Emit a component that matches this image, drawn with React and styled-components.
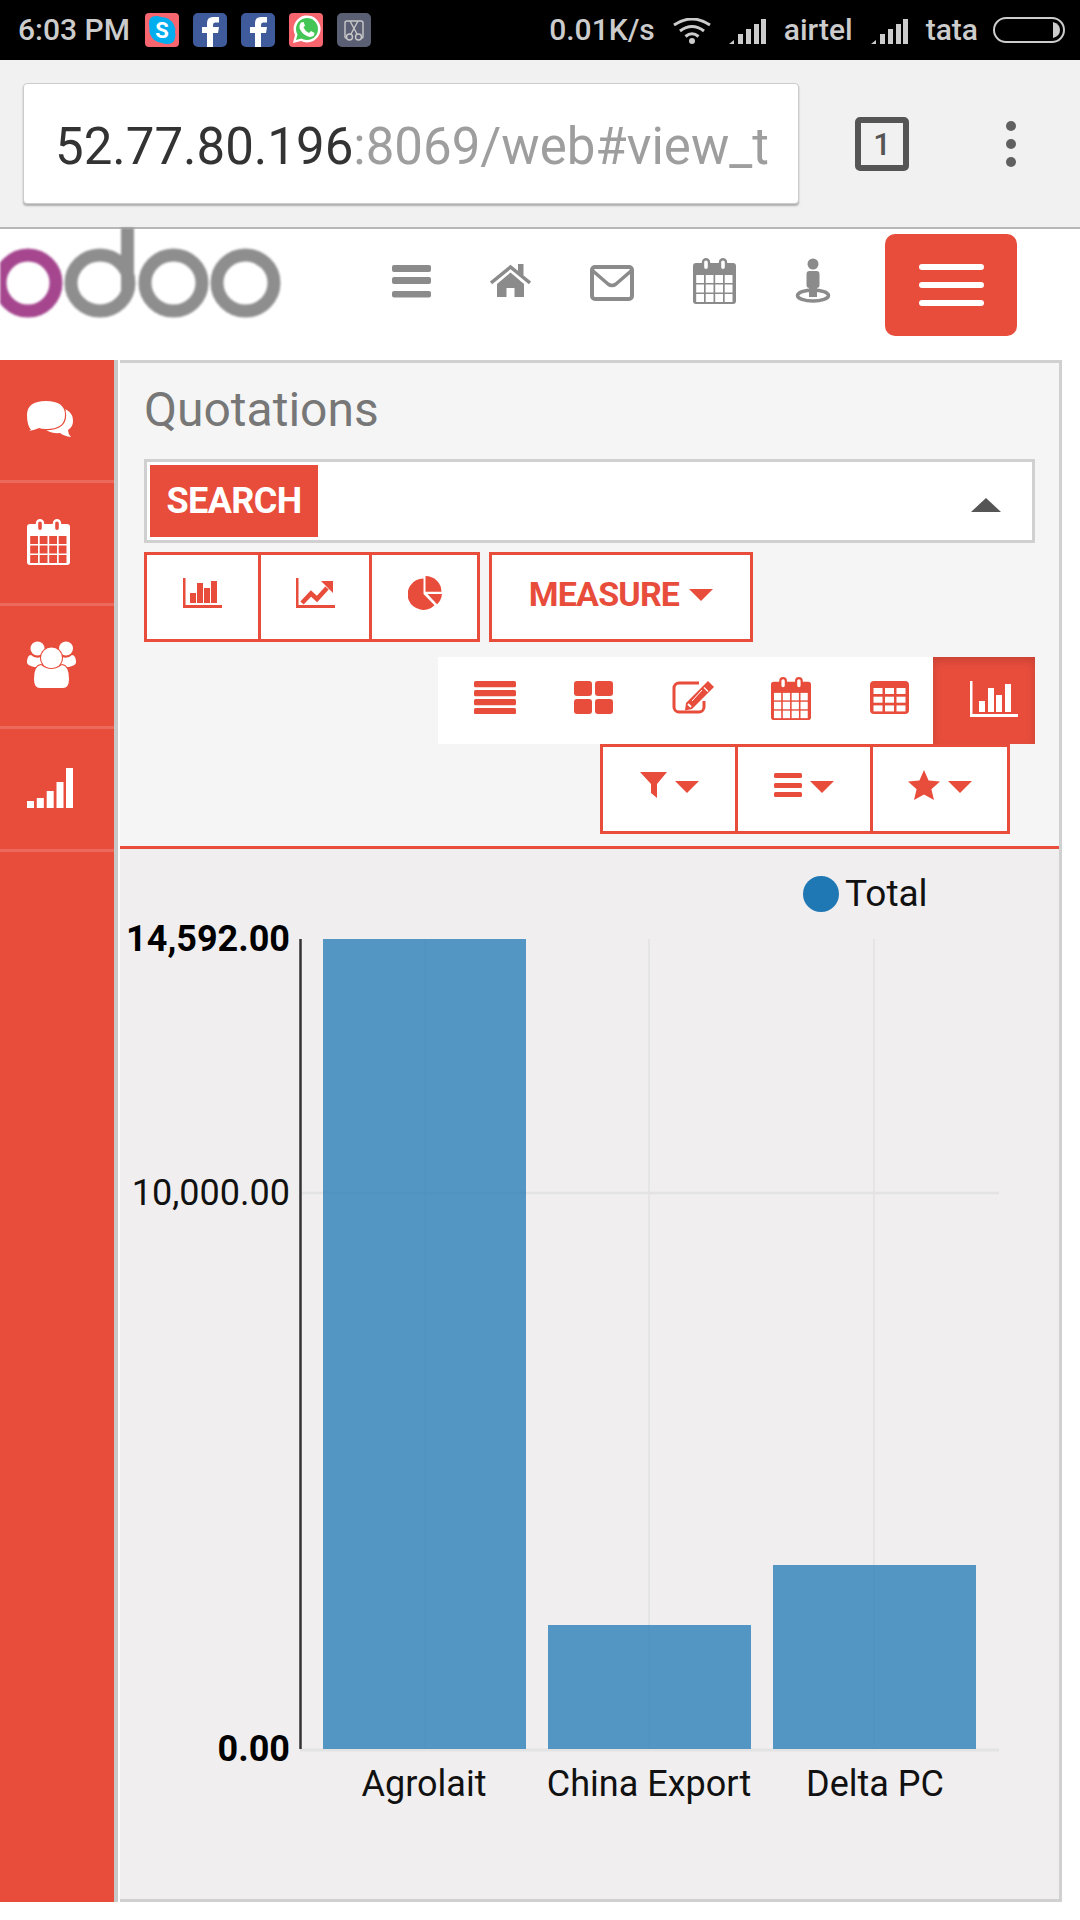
import React from 'react';
import styled, { createGlobalStyle } from 'styled-components';

const RED = '#e84d3c';
const Global = createGlobalStyle`
  html, body { margin: 0; padding: 0; background: #fff; }
  * { box-sizing: border-box; }
  body { font-family: Roboto, "Liberation Sans", sans-serif; }
`;
const Page = styled.div`width:1080px;height:1920px;overflow:hidden;display:flex;flex-direction:column;background:#fff;`;
const StatusBar = styled.div`height:60px;background:#000;color:#ccc;display:flex;align-items:center;padding:0 15px 0 18px;font-size:30px;font-weight:500;flex:none;`;
const StatusText = styled.span`line-height:60px;margin-top:-1px;`;
const StatusIcons = styled.div`display:flex;gap:14px;margin-left:15px;`;
const StatusRight = styled.div`display:flex;align-items:center;gap:18px;margin-left:auto;`;
const Chrome = styled.div`height:169px;flex:none;background:#f1f1f1;border-bottom:2px solid #b8b8b8;display:flex;align-items:flex-start;padding:23px 0 0 23px;`;
const Address = styled.div`width:776px;height:121px;background:#fff;border:1px solid #ccc;border-radius:4px;box-shadow:0 2px 2px rgba(0,0,0,.28);padding:5px 30px 0 31px;display:flex;align-items:center;font-size:51px;`;
const AddressClip = styled.div`overflow:hidden;white-space:nowrap;width:100%;color:#9e9e9e;`;
const Host = styled.span`color:#333;`;
const TabCount = styled.div`width:54px;height:54px;margin:34px 0 0 56px;border:6px solid #555;border-radius:5px;color:#555;font-size:31px;font-weight:500;display:flex;align-items:center;justify-content:center;`;
const Dots = styled.div`display:flex;flex-direction:column;gap:8px;margin:38px 0 0 97px;`;
const Dot = styled.span`width:10px;height:10px;border-radius:50%;background:#606060;`;
const Header = styled.div`height:131px;flex:none;display:flex;align-items:flex-start;color:#8b8b8b;`;
const Logo = styled.svg`width:285px;height:90px;flex:none;margin:-1px 107px 0 0;filter:blur(1px);`;
const NavIcon = styled.svg`flex:none;height:46px;margin:29px 59px 0 0;color:#8b8b8b;`;
const MenuBtn = styled.div`width:132px;height:102px;margin:5px 0 0 -5px;background:${RED};border-radius:10px;display:flex;flex-direction:column;align-items:center;justify-content:center;gap:12px;`;
const MenuLine = styled.span`width:65px;height:6px;background:#fff;border-radius:3px;`;
const Body = styled.div`height:1542px;flex:none;display:flex;`;
const Sidebar = styled.div`width:118px;flex:none;background:${RED};border-right:4px solid #c8c8c8;display:flex;flex-direction:column;`;
const SideRow = styled.div`height:123px;flex:none;border-bottom:3px solid #ec6a5b;display:flex;align-items:center;padding:0 0 2px 27px;color:#fff;`;
const Panel = styled.div`width:942px;margin-left:2px;flex:none;border:3px solid #d0d0d0;border-left:none;display:flex;flex-direction:column;`;
const Top = styled.div`height:486px;flex:none;background:#f5f5f5;border-bottom:3px solid ${RED};padding:0 24px;display:flex;flex-direction:column;`;
const Title = styled.h1`margin:0;height:96px;flex:none;font-size:48px;font-weight:400;color:#777;line-height:93px;`;
const SearchBox = styled.div`height:84px;flex:none;background:#fff;border:3px solid #d0d0d0;padding:3px;display:flex;align-items:center;justify-content:space-between;`;
const SearchLabel = styled.div`width:168px;height:72px;background:${RED};color:#fff;font-size:36px;font-weight:700;letter-spacing:-.6px;display:flex;align-items:center;justify-content:center;`;
const SearchCaret = styled.svg`width:30px;height:14px;margin:8px 28px 0 0;`;
const BtnRow = styled.div`display:flex;margin-top:9px;height:90px;flex:none;`;
const GroupBtn = styled.div`height:90px;flex:none;background:#fff;border:3px solid ${RED};color:${RED};display:flex;align-items:center;justify-content:center;gap:8px;padding-bottom:8px;margin-left:${p => p.$first ? 0 : -3}px;width:${p => p.$w}px;`;
const MeasureBtn = styled(GroupBtn)`margin-left:9px;font-size:34px;font-weight:700;letter-spacing:-.8px;gap:10px;padding-bottom:6px;`;
const Switcher = styled.div`display:grid;grid-template-columns:98px 98px 102px 94px 95px 102px;align-self:flex-end;margin-top:15px;height:87px;flex:none;background:#fff;padding-left:8px;color:${RED};`;
const SwitchItem = styled.div`display:flex;align-items:center;justify-content:center;padding-left:${p => p.$pl || 0}px;padding-bottom:${p => p.$pb ?? 6}px;`;
const ActiveItem = styled(SwitchItem)`background:${RED};color:#fff;box-shadow:inset 0 4px 8px rgba(0,0,0,.14);`;
const FilterRow = styled.div`display:flex;align-self:flex-end;margin-right:25px;height:90px;flex:none;`;
const ChartArea = styled.div`flex:1;background:#f0eeef;`;
const ChartSvg = styled.svg`display:block;width:939px;height:1050px;font-family:Roboto,sans-serif;`;
const ShiftUp = styled.div`margin-top:-2px;`;
const BatteryWrap = styled.div`margin-left:-3px;display:flex;`;

const Caret = ({ w = 24, h = 12, mt = 4 }) => (
  <svg width={w} height={h} viewBox="0 0 24 12" style={{ marginTop: mt }}><path d="M0 0H24L12 12Z" fill="currentColor" /></svg>
);
const Calendar = ({ w, h, hole, as: C = 'svg', ...rest }) => {
  const cells = [];
  for (let r = 0; r < 3; r++) for (let c = 0; c < 4; c++) cells.push(<rect key={r + '-' + c} x={3.2 + c * 9.5} y={17 + r * 9.5} width={7.8} height={8} fill={hole} />);
  return (
    <C width={w} height={h} viewBox="0 0 43 46" preserveAspectRatio="none" {...rest}>
      <rect x="0" y="5" width="43" height="41" rx="3" fill="currentColor" />
      {cells}
      <rect x="10" y="1.2" width="6" height="11" rx="3" fill={hole} stroke="currentColor" strokeWidth="2.4" />
      <rect x="27" y="1.2" width="6" height="11" rx="3" fill={hole} stroke="currentColor" strokeWidth="2.4" />
    </C>
  );
};
const BarChart = ({ w = 39, h = 30 }) => (
  <svg width={w} height={h} viewBox="0 0 39 30" fill="currentColor">
    <path d="M0 0H2.5V27H39V30H0Z" /><rect x="7" y="15" width="6" height="10" /><rect x="14" y="5" width="6" height="20" /><rect x="21" y="10" width="6" height="15" /><rect x="28" y="3" width="6" height="22" />
  </svg>
);
const ActiveChart = () => (
  <svg width="48" height="36" viewBox="0 0 48 36" fill="currentColor">
    <path d="M0 0H2.500V33H48V36H0Z" /><rect x="9" y="20" width="6" height="11" /><rect x="18" y="7" width="6" height="24" /><rect x="26" y="14" width="6" height="17" /><rect x="35" y="3" width="6" height="28" />
  </svg>
);
const LineChart = () => (
  <svg width="39" height="30" viewBox="0 0 39 30" fill="currentColor">
    <path d="M0 0H2.5V27H39V30H0Z" />
    <path d="M6 25L15 15.5L21 21L31 10" fill="none" stroke="currentColor" strokeWidth="4.6" />
    <path d="M25 3H37V15Z" />
  </svg>
);
const Pie = () => (
  <svg width="34" height="34" viewBox="0 0 34 34" fill="currentColor">
    <path d="M15.5 18V2.5A15.7 15.7 0 1 0 26.5 29.2Z" />
    <path d="M17.5 0A16 16 0 0 1 33.5 15.7H17.5Z" />
    <path d="M19.5 18H34A16 16 0 0 1 29 28.3Z" />
  </svg>
);
const ListIcon = () => (
  <svg width="42" height="33" viewBox="0 0 42 33" fill="currentColor">
    {[0, 9, 18, 27].map(y => <rect key={y} y={y} width="42" height="6.2" rx="1.5" />)}
  </svg>
);
const Kanban = () => (
  <svg width="39" height="33" viewBox="0 0 39 33" fill="currentColor">
    <rect width="18" height="15" rx="3" /><rect x="21" width="18" height="15" rx="3" /><rect y="18" width="18" height="15" rx="3" /><rect x="21" y="18" width="18" height="15" rx="3" />
  </svg>
);
const EditIcon = () => (
  <svg width="42" height="33" viewBox="0 0 42 33">
    <path d="M27 2H7A5 5 0 0 0 2 7V26A5 5 0 0 0 7 31H27A5 5 0 0 0 32 26V20" fill="none" stroke="currentColor" strokeWidth="3" />
    <path d="M36 0L42 6L20 28L13 29.5L14 22Z" fill="currentColor" />
    <path d="M32 6.5L36 10.5" stroke="#fff" strokeWidth="1.2" />
    <path d="M16 23L19 26" stroke="#fff" strokeWidth="2" />
    <path d="M30 9L20 20" stroke="#fff" strokeWidth="1" />
  </svg>
);
const TableIcon = () => (
  <svg width="39" height="33" viewBox="0 0 39 33">
    <rect width="39" height="33" rx="4" fill="currentColor" />
    {[0, 1, 2].map(r => [0, 1, 2].map(c => <rect key={r + '' + c} x={3.5 + c * 11.5} y={7 + r * 8.7} width="9" height="6" fill="#fff" />))}
  </svg>
);
const FilterIcon = () => (
  <svg width="27" height="26" viewBox="0 0 27 26" fill="currentColor"><path d="M0 0H27L17 12V26L11 21V12Z" /></svg>
);
const RowsIcon = () => (
  <svg width="28" height="24" viewBox="0 0 28 24" fill="currentColor">
    {[0, 10, 19].map(y => <rect key={y} y={y} width="28" height="5" rx="1.5" />)}
  </svg>
);
const StarIcon = () => (
  <svg width="32" height="30" viewBox="0 0 32 30" fill="currentColor"><path d="M16 0L20.6 10.6L32 11.6L23.4 19.2L26 30L16 24.4L6 30L8.6 19.2L0 11.6L11.4 10.6Z" /></svg>
);

const Tile = styled.svg`width:34px;height:34px;flex:none;display:block;`;
const Skype = () => (
  <Tile viewBox="0 0 34 34">
    <rect width="34" height="34" rx="4" fill="#f7656f" />
    <path d="M4 10Q4 3 11 3Q14 3 16 4Q25 4 29 12Q31 16 30 19Q31 22 30 25Q29 31 22 31Q19 31 17 30Q8 29 5 21Q4 18 4.500 15Q4 12 4 10Z" fill="#00aeef" />
    <text x="17" y="25" textAnchor="middle" fontSize="22" fontWeight="700" fill="#fff" fontFamily="Roboto">S</text>
  </Tile>
);
const Fb = () => (
  <Tile viewBox="0 0 34 34">
    <rect width="34" height="34" rx="5" fill="#3f5b9b" />
    <path d="M14 34V20H9V14H14V10Q14 4 20 4H26V9.500H22Q20 9.500 20 12V14H26L25 20H20V34Z" fill="#fff" />
  </Tile>
);
const Whats = () => (
  <Tile viewBox="0 0 34 34">
    <rect width="34" height="34" rx="4" fill="#f7656f" />
    <path d="M4 30L6 22A13.500 13.500 0 1 1 12 28Z" fill="#fff" />
    <path d="M7 27L8.500 21.500A11 11 0 1 1 12.500 25.500Z" fill="#43c655" />
    <path d="M12 9.500L14.500 9L16 12.500L14.500 14.500Q16 18 20 20L22 18L25.500 20L25 22.500Q22 25 18 23Q12 20 10.500 15Q10 12 12 9.500Z" fill="#fff" />
  </Tile>
);
const Cut = () => (
  <Tile viewBox="0 0 34 34">
    <rect width="34" height="34" rx="5" fill="#5b5f74" />
    <path d="M10 25H9Q8 25 8 24V10Q8 8 10 8H24Q26 8 26 10V24Q26 25 25 25H24" fill="none" stroke="#c9c9c9" strokeWidth="1.4" />
    <path d="M13 8L20 21M21 8L14 21" stroke="#c9c9c9" strokeWidth="1.4" />
    <circle cx="12.500" cy="24" r="3" fill="none" stroke="#c9c9c9" strokeWidth="1.4" />
    <circle cx="21.500" cy="24" r="3" fill="none" stroke="#c9c9c9" strokeWidth="1.4" />
  </Tile>
);
const Wifi = () => (
  <svg width="38" height="26" viewBox="0 0 38 26" fill="none" stroke="#ccc" strokeWidth="3" style={{ marginTop: 1 }}>
    <path d="M1 7Q19 -5 37 7" /><path d="M7 13Q19 4 31 13" /><path d="M12.500 18.500Q19 13 25.500 18.500" />
    <circle cx="19" cy="23" r="3" fill="#ccc" stroke="none" />
  </svg>
);
const Signal = () => (
  <svg width="37" height="25" viewBox="0 0 37 25" fill="#ccc" style={{ marginTop: 2 }}>
    <path d="M0 25L5 21V25Z" /><rect x="9" y="15" width="5" height="10" /><rect x="17" y="10" width="5" height="15" /><rect x="25" y="5" width="5" height="20" /><rect x="32" y="0" width="5" height="25" />
  </svg>
);
const Battery = () => (
  <svg width="72" height="26" viewBox="0 0 72 26">
    <rect x="1" y="1" width="70" height="24" rx="12" fill="none" stroke="#ccc" strokeWidth="2" />
    <path d="M60 5H60Q67 7 67 13Q67 19 60 21Z" fill="#ccc" />
  </svg>
);

const ChatIcon = () => (
  <svg width="46" height="37" viewBox="0 0 46 37" style={{ display: 'block' }}>
    <path d="M30 6Q46 8 46 20Q46 26 41 29Q41 33 44 36Q37 35 33 32Q22 33 17 27Z" fill="#fff" />
    <path d="M4 29Q0 24 0 14Q0 0 19 0Q38 0 38 14Q38 28 19 28Q14 28 12 27Q8 29 2 30Q5 28 4 29Z" fill="#fff" stroke={RED} strokeWidth="2.4" paintOrder="stroke" />
  </svg>
);
const UsersIcon = () => (
  <svg width="49" height="47" viewBox="0 0 49 47" fill="#fff" style={{ display: 'block' }}>
    <circle cx="10.500" cy="7.500" r="7" /><circle cx="39" cy="7.500" r="7" />
    <path d="M0 22Q0 14 4 14Q8 18 14 16L16 26Q2 27 0 22Z" /><path d="M49 22Q49 14 45 14Q41 18 35 16L33 26Q47 27 49 22Z" />
    <circle cx="24.500" cy="17" r="10.500" stroke={RED} strokeWidth="2" paintOrder="stroke" />
    <path d="M7 38Q7 25 14 24Q24 32 35 24Q42 25 42 38Q42 47 36 47H13Q7 47 7 38Z" stroke={RED} strokeWidth="2" paintOrder="stroke" />
  </svg>
);
const SignalBars = () => (
  <svg width="46" height="40" viewBox="0 0 46 40" fill="#fff" style={{ display: 'block' }}>
    <rect y="33" width="7" height="7" /><rect x="9.800" y="30" width="7" height="10" /><rect x="19.700" y="23" width="7" height="17" /><rect x="29.500" y="14" width="7" height="26" /><rect x="39" width="7" height="40" />
  </svg>
);

const bars = [
  { x: 323, y: 939 }, { x: 548, y: 1625 }, { x: 773, y: 1565 },
];
const xLabels = [['Agrolait', 424], ['China Export', 649], ['Delta PC', 875]];

export default function App() {
  return (
    <Page>
      <Global />
      <StatusBar>
        <StatusText>6:03 PM</StatusText>
        <StatusIcons><Skype /><Fb /><Fb /><Whats /><Cut /></StatusIcons>
        <StatusRight>
          <StatusText>0.01K/s</StatusText>
          <Wifi /><Signal />
          <StatusText>airtel</StatusText>
          <Signal />
          <StatusText>tata</StatusText>
          <BatteryWrap><Battery /></BatteryWrap>
        </StatusRight>
      </StatusBar>
      <Chrome>
        <Address><AddressClip><Host>52.77.80.196</Host>:8069/web#view_t</AddressClip></Address>
        <TabCount>1</TabCount>
        <Dots><Dot /><Dot /><Dot /></Dots>
      </Chrome>
      <Header>
        <Logo viewBox="0 0 285 90">
          <ellipse cx="28" cy="55" rx="28" ry="28" fill="none" stroke="#a5468f" strokeWidth="13" />
          <ellipse cx="100" cy="55" rx="29" ry="28" fill="none" stroke="#8e8e8e" strokeWidth="13" />
          <rect x="121" y="0" width="13" height="62" fill="#8e8e8e" />
          <ellipse cx="173.500" cy="55" rx="28.500" ry="28" fill="none" stroke="#8e8e8e" strokeWidth="13" />
          <ellipse cx="245.500" cy="55" rx="28.500" ry="28" fill="none" stroke="#8e8e8e" strokeWidth="13" />
        </Logo>
        <NavIcon width="39" viewBox="0 0 39 46" fill="currentColor">
          <rect y="7" width="39" height="7" rx="2" /><rect y="19" width="39" height="7" rx="2" /><rect y="33" width="39" height="6.500" rx="2" />
        </NavIcon>
        <NavIcon width="41" viewBox="0 0 41 46" fill="currentColor">
          <path d="M1 25L20.500 9L40 25" fill="none" stroke="currentColor" strokeWidth="3.500" />
          <rect x="28" y="6" width="5.500" height="11" />
          <path d="M7 26L20.500 14.500L34 26V39H24.500V30H16.500V39H7Z" />
        </NavIcon>
        <NavIcon width="44" viewBox="0 0 44 46" fill="none" stroke="currentColor">
          <rect x="2" y="9" width="40" height="32" rx="3" strokeWidth="4" />
          <path d="M3 13L18 26Q22 29 26 26L41 13" strokeWidth="3.500" />
        </NavIcon>
        <Calendar as={NavIcon} w={43} h={46} hole="#fff" />
        <NavIcon width="36" viewBox="0 0 36 46" fill="currentColor">
          <ellipse cx="18" cy="37.500" rx="15.500" ry="5.500" fill="none" stroke="currentColor" strokeWidth="3.500" />
          <circle cx="18" cy="6" r="5.500" /><rect x="11.500" y="13" width="13" height="17" rx="3" /><rect x="14" y="24" width="8" height="15" />
        </NavIcon>
        <MenuBtn><MenuLine /><MenuLine /><MenuLine /></MenuBtn>
      </Header>
      <Body>
        <Sidebar>
          <SideRow><ChatIcon /></SideRow>
          <SideRow><Calendar w={43} h={46} hole={RED} /></SideRow>
          <SideRow><ShiftUp><UsersIcon /></ShiftUp></SideRow>
          <SideRow><SignalBars /></SideRow>
        </Sidebar>
        <Panel>
          <Top>
            <Title>Quotations</Title>
            <SearchBox>
              <SearchLabel>SEARCH</SearchLabel>
              <SearchCaret viewBox="0 0 30 14"><path d="M15 0L30 14H0Z" fill="#555" /></SearchCaret>
            </SearchBox>
            <BtnRow>
              <GroupBtn $first $w={117}><BarChart /></GroupBtn>
              <GroupBtn $w={114}><LineChart /></GroupBtn>
              <GroupBtn $w={111}><Pie /></GroupBtn>
              <MeasureBtn $w={264}>MEASURE <Caret mt={2} /></MeasureBtn>
            </BtnRow>
            <Switcher>
              <SwitchItem><ListIcon /></SwitchItem>
              <SwitchItem><Kanban /></SwitchItem>
              <SwitchItem><EditIcon /></SwitchItem>
              <SwitchItem $pb={4}><Calendar w={40} h={43} hole="#fff" /></SwitchItem>
              <SwitchItem $pl={8}><TableIcon /></SwitchItem>
              <ActiveItem $pb={3} $pl={20}><ActiveChart /></ActiveItem>
            </Switcher>
            <FilterRow>
              <GroupBtn $first $w={138}><FilterIcon /><Caret mt={4} /></GroupBtn>
              <GroupBtn $w={138}><RowsIcon /><Caret mt={4} /></GroupBtn>
              <GroupBtn $w={140}><StarIcon /><Caret mt={4} /></GroupBtn>
            </FilterRow>
          </Top>
          <ChartArea>
            <ChartSvg viewBox="120 849 939 1050">
              <circle cx="821" cy="894" r="18" fill="#1f77b4" />
              <text x="845" y="906" fontSize="37" fill="#111">Total</text>
              {[425, 649, 874].map(x => <line key={x} x1={x} x2={x} y1="939" y2="1749" stroke="#e6e5e6" strokeWidth="2" />)}
              <line x1="300" x2="999" y1="1193" y2="1193" stroke="#e4e3e4" strokeWidth="2.500" />
              <line x1="300" x2="999" y1="1750" y2="1750" stroke="#e4e3e4" strokeWidth="3" />
              {bars.map(b => <rect key={b.x} x={b.x} y={b.y} width="203" height={1749 - b.y} fill="#1f77b4" fillOpacity=".75" />)}
              <line x1="300.500" x2="300.500" y1="939" y2="1749" stroke="#333" strokeWidth="2.500" />
              <text x="290" y="951" fontSize="36" fontWeight="700" textAnchor="end" fill="#000">14,592.00</text>
              <text x="290" y="1205" fontSize="36" textAnchor="end" fill="#111">10,000.00</text>
              <text x="290" y="1761" fontSize="36" fontWeight="700" textAnchor="end" fill="#000">0.00</text>
              {xLabels.map(([t, x]) => <text key={t} x={x} y="1796" fontSize="36" textAnchor="middle" fill="#111">{t}</text>)}
            </ChartSvg>
          </ChartArea>
        </Panel>
      </Body>
    </Page>
  );
}
